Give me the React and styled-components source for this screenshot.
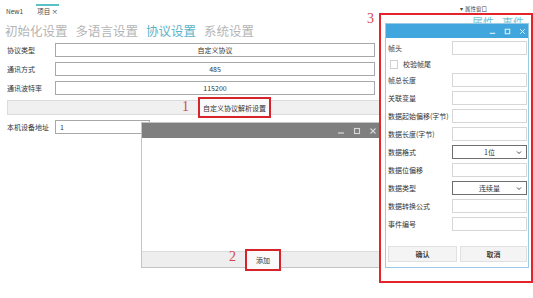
import React from "react";
import styled, { createGlobalStyle } from "styled-components";

const Global = createGlobalStyle`
  html, body { margin: 0; padding: 0; background: #fff; }
  body { font-family: "Noto Sans CJK SC", "Noto Sans", sans-serif; color: #333; }
  * { box-sizing: border-box; }
`;

const Root = styled.div`
  position: relative;
  width: 533px;
  height: 298px;
  overflow: hidden;
  background: #fff;
  display: flex;
`;

const Main = styled.div`
  width: 380px;
  display: flex;
  flex-direction: column;
`;

const TabBar = styled.div`
  display: flex;
  align-items: flex-start;
  gap: 12px;
  padding: 4px 0 0 5px;
  height: 16px;
`;

const Tab = styled.div`
  font-size: 6.5px;
  line-height: 10px;
  color: #444;
  padding: 0 1px;
  border-top: 2px solid ${(p) => (p.$active ? "#5cc0c6" : "transparent")};
`;

const Heading = styled.div`
  display: flex;
  gap: 8px;
  margin-top: 6px;
  padding-left: 5px;
  height: 17px;
`;

const HeadItem = styled.span`
  font-size: 12.5px;
  line-height: 17px;
  color: ${(p) => (p.$active ? "#5ab3c8" : "#b4b4b4")};
  white-space: nowrap;
`;

const Form = styled.div`
  display: flex;
  flex-direction: column;
  gap: 5px;
  margin-top: 4px;
`;

const Row = styled.div`
  display: grid;
  grid-template-columns: 48px ${(p) => p.$w || 320}px;
  align-items: center;
  padding-left: 7px;
  height: 14px;
`;

const Label = styled.span`
  font-size: 7px;
  line-height: 10px;
  color: #333;
  white-space: nowrap;
`;

const Field = styled.div`
  height: 14px;
  border: 1px solid ${(p) => (p.$dark ? "#6e6e6e" : p.$light ? "#d6d6d6" : "#a8a8a8")};
  background: #fff;
  font-size: 7px;
  line-height: 12px;
  color: #333;
  display: flex;
  align-items: center;
  justify-content: ${(p) => (p.$left ? "flex-start" : "center")};
  padding: 0 4px;
  position: relative;
`;

const ButtonBar = styled.div`
  margin-left: 7px;
  height: 15px;
  width: 373px;
  background: #f0f0f0;
  border: 1px solid #dcdcdc;
  display: flex;
  align-items: center;
  padding-left: 190px;
`;

const HighlightButton = styled.div`
  height: ${(p) => p.$h || 21}px;
  width: ${(p) => p.$w || 73}px;
  border: 2px solid #d8232c;
  background: #fafafa;
  font-size: 7px;
  color: #333;
  display: flex;
  align-items: center;
  justify-content: center;
  flex-shrink: 0;
  white-space: nowrap;
`;

const Side = styled.div`
  flex: 1;
  display: flex;
  flex-direction: column;
`;

const SideHeader = styled.div`
  padding: 6px 0 0 80px;
  font-size: 5.5px;
  line-height: 6px;
  color: #444;
  display: flex;
  gap: 2px;
  white-space: nowrap;
`;

const SideTabs = styled.div`
  display: flex;
  gap: 8px;
  padding: 4px 0 0 92px;
`;

const SideTab = styled.span`
  font-size: 11px;
  line-height: 12px;
  color: #74c3d6;
`;

const Window = styled.div`
  position: absolute;
  left: ${(p) => p.$x}px;
  top: ${(p) => p.$y}px;
  width: ${(p) => p.$w}px;
  height: ${(p) => p.$h}px;
  background: #fff;
  border: 1px solid ${(p) => p.$border};
  display: flex;
  flex-direction: column;
`;

const TitleBar = styled.div`
  height: ${(p) => p.$h}px;
  background: ${(p) => p.$bg};
  display: flex;
  align-items: center;
  justify-content: flex-end;
  gap: ${(p) => p.$gap}px;
  padding-right: ${(p) => p.$pr}px;
  flex-shrink: 0;
`;

const WinBody = styled.div`
  flex: 1;
`;

const Footer = styled.div`
  height: 16px;
  background: #eeeeee;
  border-top: 1px solid #dcdcdc;
  display: flex;
  align-items: center;
  padding-left: 103px;
`;

const Num = styled.span`
  position: absolute;
  left: ${(p) => p.$x}px;
  top: ${(p) => p.$y}px;
  font-family: "Liberation Serif", serif;
  font-size: 14px;
  line-height: 14px;
  color: #d6454b;
`;

const RedFrame = styled.div`
  position: absolute;
  left: 379px;
  top: 13px;
  width: 154px;
  height: 270px;
  border: 2px solid #e3242b;
`;

const PropBody = styled.div`
  flex: 1;
  display: flex;
  flex-direction: column;
  padding: 1px 1px 0 2px;
`;

const PropRow = styled.div`
  display: grid;
  grid-template-columns: 64px 75px;
  align-items: center;
  height: ${(p) => p.$h || 18}px;
`;

const CheckRow = styled.div`
  display: flex;
  align-items: center;
  gap: 5px;
  height: 14px;
  padding-left: 2px;
`;

const CheckBox = styled.span`
  width: 8px;
  height: 9px;
  border: 1px solid #d0d0d0;
  background: #fff;
`;

const Chevron = styled.svg`
  position: absolute;
  right: 4px;
  top: 4px;
`;

const BtnRow = styled.div`
  display: grid;
  grid-template-columns: 69px 67px;
  gap: 3px;
  margin-top: 13px;
`;

const DlgButton = styled.div`
  height: 16px;
  background: #f4f4f4;
  border: 1px solid #e0e0e0;
  font-size: 7px;
  font-weight: 700;
  color: #444;
  display: flex;
  align-items: center;
  justify-content: center;
`;

const WinIcons = ({ color, size }) => (
  <>
    <svg width={size} height={size} viewBox="0 0 10 10">
      <line x1="2" y1="7" x2="8" y2="7" stroke={color} strokeWidth="1.2" />
    </svg>
    <svg width={size} height={size} viewBox="0 0 10 10">
      <rect x="2.5" y="2.5" width="5" height="5" fill="none" stroke={color} strokeWidth="1.1" />
    </svg>
    <svg width={size} height={size} viewBox="0 0 10 10">
      <path d="M2.5 2.5 L7.5 7.5 M7.5 2.5 L2.5 7.5" stroke={color} strokeWidth="1.1" />
    </svg>
  </>
);

const Select = ({ value }) => (
  <Field $dark>
    {value}
    <Chevron width="6" height="5" viewBox="0 0 6 5">
      <path d="M1 1.5 L3 3.5 L5 1.5" fill="none" stroke="#333" strokeWidth="0.9" />
    </Chevron>
  </Field>
);

const props = [
  ["帧总长度"],
  ["关联变量"],
  ["数据起始偏移(字节)"],
  ["数据长度(字节)"],
  ["数据格式", "1位"],
  ["数据位偏移"],
  ["数据类型", "连续量"],
  ["数据转换公式"],
  ["事件编号"],
];

export default function App() {
  return (
    <Root>
      <Global />
      <Main>
        <TabBar>
          <Tab>New1</Tab>
          <Tab $active>项目 ×</Tab>
        </TabBar>
        <Heading>
          <HeadItem>初始化设置</HeadItem>
          <HeadItem>多语言设置</HeadItem>
          <HeadItem $active>协议设置</HeadItem>
          <HeadItem>系统设置</HeadItem>
        </Heading>
        <Form>
          <Row>
            <Label>协议类型</Label>
            <Field>自定义协议</Field>
          </Row>
          <Row>
            <Label>通讯方式</Label>
            <Field>485</Field>
          </Row>
          <Row>
            <Label>通讯波特率</Label>
            <Field>115200</Field>
          </Row>
          <ButtonBar>
            <HighlightButton>自定义协议解析设置</HighlightButton>
          </ButtonBar>
          <Row $w={95}>
            <Label>本机设备地址</Label>
            <Field $left>1</Field>
          </Row>
        </Form>
      </Main>
      <Side>
        <SideHeader>
          <span>▾</span>
          <span>属性窗口</span>
        </SideHeader>
        <SideTabs>
          <SideTab>属性</SideTab>
          <SideTab>事件</SideTab>
        </SideTabs>
      </Side>

      <Window $x={141} $y={122} $w={240} $h={146} $border="#c4c4c4">
        <TitleBar $h={15} $bg="#7f7f7f" $gap={6} $pr={2}>
          <WinIcons color="#d8d8d8" size={10} />
        </TitleBar>
        <WinBody />
        <Footer>
          <HighlightButton $w={36} $h={22}>添加</HighlightButton>
        </Footer>
      </Window>

      <RedFrame />

      <Window $x={385} $y={23} $w={144} $h={245} $border="#9cc9e6">
        <TitleBar $h={14} $bg="#41a6de" $gap={6} $pr={1}>
          <WinIcons color="#e8f4fb" size={9} />
        </TitleBar>
        <PropBody>
          <PropRow>
            <Label>帧头</Label>
            <Field $light />
          </PropRow>
          <CheckRow>
            <CheckBox />
            <Label>校验帧尾</Label>
          </CheckRow>
          {props.map(([label, value]) => (
            <PropRow key={label}>
              <Label>{label}</Label>
              {value ? <Select value={value} /> : <Field $light />}
            </PropRow>
          ))}
          <BtnRow>
            <DlgButton>确认</DlgButton>
            <DlgButton>取消</DlgButton>
          </BtnRow>
        </PropBody>
      </Window>

      <Num $x={182} $y={100}>1</Num>
      <Num $x={229} $y={250}>2</Num>
      <Num $x={367} $y={12}>3</Num>
    </Root>
  );
}
